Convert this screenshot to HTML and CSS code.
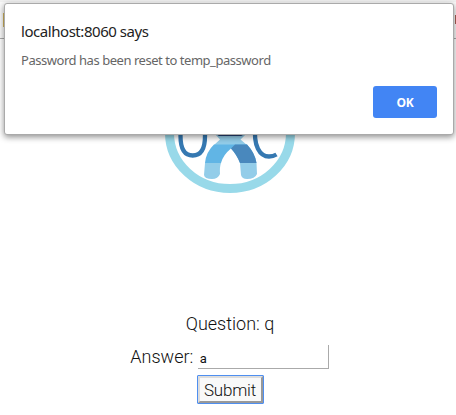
FILE: index.html
```html
<!DOCTYPE html>
<html lang="en">
<head>
<meta charset="utf-8">
<title>Password reset</title>
<link rel="stylesheet" href="styles.css">
</head>
<body>
<div class="toolbar"></div>
<header class="bookmarks"><span class="folder"></span><span class="bookmark"></span></header>
<main class="page">
  <svg class="logo" width="130" height="120" viewBox="165 73 130 120">
    <ellipse cx="230" cy="133" rx="60.5" ry="55.5" fill="#fff" stroke="#98d9e9" stroke-width="9"/>
    <g fill="none" stroke="#3578b1" stroke-width="4.300">
      <path d="M180.500 126V136C180.500 149 185 155.500 192.700 155.500C200.500 155.500 205 149 205 136V126"/>
      <path d="M255.500 126C253 146 260 156.500 269 156.500C272 156.500 274 156 276.500 154.500"/>
    </g>
    <path d="M212 125H249L246 134L240 137H220L215 134Z" fill="#273f73"/>
    <path d="M215 134L219 136H241L246 134L240.500 139.500L247 145H214L220 139.500Z" fill="#93cde9"/>
    <path d="M214 144.500H247Q255 153 256.500 163H240Q237 155 231 148.500Q223 155 221 163H205Q206 152 214 144.500Z" fill="#61b5e5"/>
    <path d="M231 148.500L235 144.500H247Q255 153 256.500 163H240Q237 155 231 148.500Z" fill="#4988bd"/>
    <path d="M205 163H221Q219.500 167 220 174Q218 179 212 179Q204.500 179 204 175ZM240 163H256.500L257 174Q255 179 247 179Q242 179 241 175Z" fill="#93cde9"/>
  </svg>
  <form class="reset">
    <div class="question">Question: q</div>
    <label class="answer">Answer: <input type="text" value="a"></label>
    <button class="submit" type="button"><span>Submit</span></button>
  </form>
</main>
<section class="dialog">
  <h1>localhost:8060 says</h1>
  <p>Password has been reset to temp_password</p>
  <button class="ok" type="button">OK</button>
</section>
</body>
</html>
```
FILE: styles.css
```css
* { box-sizing: border-box; }
body { margin: 0; height: 415px; overflow: hidden; background: #fff; font-family: Roboto, sans-serif; }
.toolbar { height: 2px; background: #f1f1f1; }
.bookmarks { display: flex; justify-content: space-between; height: 37px; padding-top: 11px; border-bottom: 1px solid #aaa; background: #fafafa; }
.folder { width: 2px; height: 14px; margin-left: 3px; background: #d4b65e; }
.bookmark { width: 1px; height: 9px; margin-top: 2px; background: #a65d54; }
.page { display: flex; flex-direction: column; align-items: center; padding: 34px 0 0 4px; }
.logo { display: block; }
.reset { display: flex; flex-direction: column; align-items: center; width: 100%; margin-top: 120px; color: #111; font-size: 18px; font-weight: 300; }
.question { height: 22px; line-height: 22px; }
.answer { display: flex; align-items: flex-start; height: 34px; padding-top: 10px; line-height: 23px; white-space: pre; margin-right: 1px; }
.answer input { width: 131px; height: 24px; padding: 3px 2px 0; border: 0 solid #aaa; border-width: 0 1px 1px 0; border-radius: 0; background: #fff; color: #111; font: 400 13px Roboto, sans-serif; outline: 0; }
.submit { display: block; width: 67px; height: 29px; margin: 6px 0 0; padding: 0; border: 1px solid #4f8ff0; border-radius: 1px; background: #4f8ff0; color: #111; font: 300 17px Roboto, sans-serif; letter-spacing: -.2px; }
.submit span { display: block; height: 27px; border: 2px solid; border-color: #ddd #999 #999 #ddd; background: #f9f9f9; line-height: 24px; }
.dialog { position: absolute; top: 3px; left: 4px; width: 450px; height: 132px; padding: 16px; border: 1px solid #aaa; border-radius: 3px; background: #fff; box-shadow: 0 2px 6px rgba(0,0,0,.45); }
.dialog h1 { margin: 0; color: #222; font: 400 15px/23px "Noto Sans", sans-serif; letter-spacing: -.45px; }
.dialog p { margin: 8px 0 0; color: #666; font: 400 13px/18px "Noto Sans", sans-serif; letter-spacing: -.46px; }
.ok { display: block; width: 64px; height: 32px; margin: 17px 0 0 auto; border: 0; border-radius: 3px; background: #4285f4; color: #fff; font: 700 12px "Open Sans", sans-serif; letter-spacing: -.2px; }
```
